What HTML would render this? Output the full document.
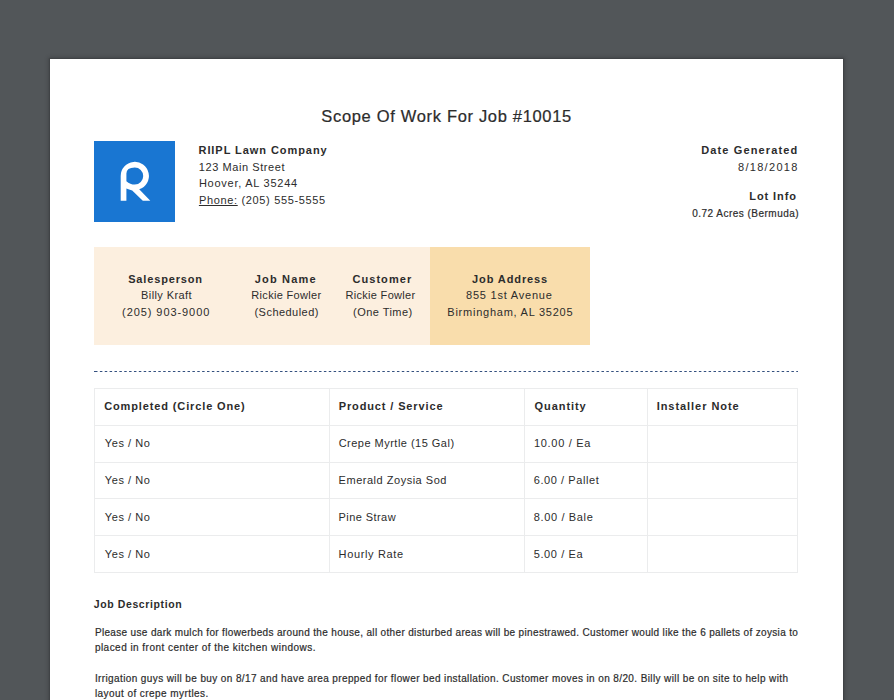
<!DOCTYPE html>
<html><head><meta charset="utf-8"><style>
html,body{margin:0;padding:0;}
body{width:894px;height:700px;overflow:hidden;background:#525659;position:relative;font-family:"Liberation Sans",sans-serif;}
.page{position:absolute;left:50px;top:59px;width:793px;height:700px;background:#fff;box-shadow:0 0 1px 1px rgba(0,0,0,0.1),0 0 4px 2px rgba(0,0,0,0.16);}
.t{position:absolute;white-space:pre;color:#2c2c2c;}
.abs{position:absolute;}
</style></head><body>
<div class="page"></div>
<div class="abs" style="left:94px;top:141px;width:81px;height:81px;background:#1976d2;"></div>
<svg class="abs" style="left:94px;top:141px" width="81" height="81" viewBox="0 0 81 81">
<path fill="#fff" fill-rule="evenodd" d="M26.7 59.7 V34.9 A14.1 14.1 0 1 1 45.2 48.3 L56.3 59.7 H48.8 L38.2 49.4 Q35 48.6 32.4 47.4 V59.7 Z M32.4 40.2 V32.5 Q32.4 26.5 40.8 26.5 A8.4 8.55 0 0 1 49.2 35 A8.4 8.55 0 0 1 40.8 43.6 Q36.2 43.6 32.4 40.2 Z"/>
</svg>
<div class="abs" style="left:94px;top:247px;width:336px;height:98px;background:#fcefdf;"></div>
<div class="abs" style="left:430px;top:247px;width:160px;height:98px;background:#f9ddac;"></div>
<svg class="abs" style="left:94px;top:371px" width="704" height="1"><line x1="0" y1="0.5" x2="704" y2="0.5" stroke="#34507f" stroke-width="1" stroke-dasharray="2.5 2.37" stroke-dashoffset="-1.0"/><rect x="0" y="0" width="1" height="1" fill="#34507f"/></svg>
<div class="abs" style="left:94px;top:388px;width:704px;height:185px;border:1px solid #ebeced;box-sizing:border-box;"></div>
<div class="abs" style="left:94px;top:425px;width:704px;height:1px;background:#ebeced"></div>
<div class="abs" style="left:94px;top:462px;width:704px;height:1px;background:#ebeced"></div>
<div class="abs" style="left:94px;top:498px;width:704px;height:1px;background:#ebeced"></div>
<div class="abs" style="left:94px;top:535px;width:704px;height:1px;background:#ebeced"></div>
<div class="abs" style="left:329px;top:388px;width:1px;height:185px;background:#ebeced"></div>
<div class="abs" style="left:524px;top:388px;width:1px;height:185px;background:#ebeced"></div>
<div class="abs" style="left:647px;top:388px;width:1px;height:185px;background:#ebeced"></div>
<div class="t" id="title" style="left:321.30px;top:105.33px;font-size:16.5px;line-height:23.1px;font-weight:400;letter-spacing:0.674px;-webkit-text-stroke:0.22px #2c2c2c;">Scope Of Work For Job #10015</div>
<div class="t" id="riipl" style="left:198.50px;top:143.49px;font-size:11px;line-height:15.4px;font-weight:700;letter-spacing:0.935px;">RIIPL Lawn Company</div>
<div class="t" id="123" style="left:198.80px;top:160.39px;font-size:11px;line-height:15.4px;font-weight:400;letter-spacing:0.571px;">123 Main Street</div>
<div class="t" id="hoover" style="left:198.90px;top:176.49px;font-size:11px;line-height:15.4px;font-weight:400;letter-spacing:0.747px;">Hoover, AL 35244</div>
<div class="t" id="phone" style="left:198.90px;top:192.99px;font-size:11px;line-height:15.4px;font-weight:400;letter-spacing:0.660px;"><span style="text-decoration:underline">Phone:</span> (205) 555-5555</div>
<div class="t" id="dategen" style="left:701.20px;top:143.39px;font-size:11px;line-height:15.4px;font-weight:700;letter-spacing:1.131px;">Date Generated</div>
<div class="t" id="date" style="left:738.00px;top:160.39px;font-size:11px;line-height:15.4px;font-weight:400;letter-spacing:1.300px;">8/18/2018</div>
<div class="t" id="lot" style="left:749.30px;top:189.29px;font-size:11px;line-height:15.4px;font-weight:700;letter-spacing:0.900px;">Lot Info</div>
<div class="t" id="acres" style="left:692.20px;top:206.53px;font-size:10px;line-height:14.0px;font-weight:400;letter-spacing:0.484px;-webkit-text-stroke:0.2px #2c2c2c;">0.72 Acres (Bermuda)</div>
<div class="t" id="sales" style="left:128.20px;top:272.49px;font-size:11px;line-height:15.4px;font-weight:700;letter-spacing:0.840px;">Salesperson</div>
<div class="t" id="billy" style="left:141.10px;top:288.29px;font-size:11px;line-height:15.4px;font-weight:400;letter-spacing:0.400px;">Billy Kraft</div>
<div class="t" id="ph2" style="left:122.10px;top:304.69px;font-size:11px;line-height:15.4px;font-weight:400;letter-spacing:0.923px;">(205) 903-9000</div>
<div class="t" id="jobname" style="left:254.70px;top:272.49px;font-size:11px;line-height:15.4px;font-weight:700;letter-spacing:1.186px;">Job Name</div>
<div class="t" id="rf1" style="left:251.30px;top:288.29px;font-size:11px;line-height:15.4px;font-weight:400;letter-spacing:0.317px;">Rickie Fowler</div>
<div class="t" id="sched" style="left:254.50px;top:304.69px;font-size:11px;line-height:15.4px;font-weight:400;letter-spacing:0.460px;">(Scheduled)</div>
<div class="t" id="cust" style="left:352.40px;top:272.49px;font-size:11px;line-height:15.4px;font-weight:700;letter-spacing:1.071px;">Customer</div>
<div class="t" id="rf2" style="left:345.40px;top:288.29px;font-size:11px;line-height:15.4px;font-weight:400;letter-spacing:0.317px;">Rickie Fowler</div>
<div class="t" id="onetime" style="left:353.00px;top:304.69px;font-size:11px;line-height:15.4px;font-weight:400;letter-spacing:0.467px;">(One Time)</div>
<div class="t" id="jobaddr" style="left:472.00px;top:272.49px;font-size:11px;line-height:15.4px;font-weight:700;letter-spacing:0.900px;">Job Address</div>
<div class="t" id="855" style="left:466.00px;top:288.29px;font-size:11px;line-height:15.4px;font-weight:400;letter-spacing:0.785px;">855 1st Avenue</div>
<div class="t" id="birm" style="left:447.30px;top:304.69px;font-size:11px;line-height:15.4px;font-weight:400;letter-spacing:0.758px;">Birmingham, AL 35205</div>
<div class="t" id="h1" style="left:104.20px;top:399.29px;font-size:11px;line-height:15.4px;font-weight:700;letter-spacing:0.871px;">Completed (Circle One)</div>
<div class="t" id="h2" style="left:338.70px;top:399.29px;font-size:11px;line-height:15.4px;font-weight:700;letter-spacing:0.875px;">Product / Service</div>
<div class="t" id="h3" style="left:534.60px;top:399.29px;font-size:11px;line-height:15.4px;font-weight:700;letter-spacing:0.929px;">Quantity</div>
<div class="t" id="h4" style="left:656.70px;top:399.29px;font-size:11px;line-height:15.4px;font-weight:700;letter-spacing:0.946px;">Installer Note</div>
<div class="t" id="yn0" style="left:104.80px;top:436.39px;font-size:11px;line-height:15.4px;font-weight:400;letter-spacing:0.571px;">Yes / No</div>
<div class="t" id="yn1" style="left:104.80px;top:473.19px;font-size:11px;line-height:15.4px;font-weight:400;letter-spacing:0.571px;">Yes / No</div>
<div class="t" id="yn2" style="left:104.80px;top:509.89px;font-size:11px;line-height:15.4px;font-weight:400;letter-spacing:0.571px;">Yes / No</div>
<div class="t" id="yn3" style="left:104.80px;top:547.39px;font-size:11px;line-height:15.4px;font-weight:400;letter-spacing:0.571px;">Yes / No</div>
<div class="t" id="p0" style="left:338.70px;top:436.39px;font-size:11px;line-height:15.4px;font-weight:400;letter-spacing:0.480px;">Crepe Myrtle (15 Gal)</div>
<div class="t" id="p1" style="left:338.60px;top:473.19px;font-size:11px;line-height:15.4px;font-weight:400;letter-spacing:0.518px;">Emerald Zoysia Sod</div>
<div class="t" id="p2" style="left:338.60px;top:509.89px;font-size:11px;line-height:15.4px;font-weight:400;letter-spacing:0.422px;">Pine Straw</div>
<div class="t" id="p3" style="left:338.60px;top:547.39px;font-size:11px;line-height:15.4px;font-weight:400;letter-spacing:0.640px;">Hourly Rate</div>
<div class="t" id="q0" style="left:534.00px;top:436.39px;font-size:11px;line-height:15.4px;font-weight:400;letter-spacing:0.689px;">10.00 / Ea</div>
<div class="t" id="q1" style="left:533.80px;top:473.19px;font-size:11px;line-height:15.4px;font-weight:400;letter-spacing:0.567px;">6.00 / Pallet</div>
<div class="t" id="q2" style="left:533.80px;top:509.89px;font-size:11px;line-height:15.4px;font-weight:400;letter-spacing:0.640px;">8.00 / Bale</div>
<div class="t" id="q3" style="left:533.70px;top:547.39px;font-size:11px;line-height:15.4px;font-weight:400;letter-spacing:0.600px;">5.00 / Ea</div>
<div class="t" id="jd" style="left:93.70px;top:597.41px;font-size:10.5px;line-height:14.7px;font-weight:700;letter-spacing:0.614px;">Job Description</div>
<div class="t" id="l1" style="left:94.90px;top:626.13px;font-size:10px;line-height:14.0px;font-weight:400;letter-spacing:0.339px;-webkit-text-stroke:0.2px #2c2c2c;">Please use dark mulch for flowerbeds around the house, all other disturbed areas will be pinestrawed. Customer would like the 6 pallets of zoysia to</div>
<div class="t" id="l2" style="left:94.90px;top:641.13px;font-size:10px;line-height:14.0px;font-weight:400;letter-spacing:0.467px;-webkit-text-stroke:0.2px #2c2c2c;">placed in front center of the kitchen windows.</div>
<div class="t" id="l3" style="left:94.90px;top:672.13px;font-size:10px;line-height:14.0px;font-weight:400;letter-spacing:0.389px;-webkit-text-stroke:0.2px #2c2c2c;">Irrigation guys will be buy on 8/17 and have area prepped for flower bed installation. Customer moves in on 8/20. Billy will be on site to help with</div>
<div class="t" id="l4" style="left:94.90px;top:687.13px;font-size:10px;line-height:14.0px;font-weight:400;letter-spacing:0.435px;-webkit-text-stroke:0.2px #2c2c2c;">layout of crepe myrtles.</div>
</body></html>
